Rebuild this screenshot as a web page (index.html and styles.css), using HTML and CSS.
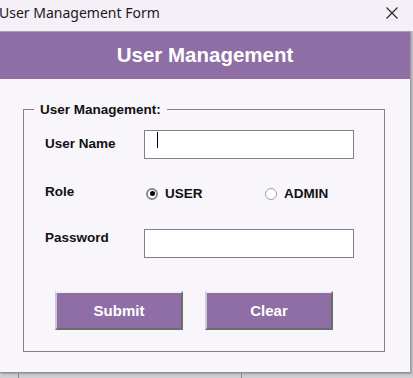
FILE: index.html
```html
<!DOCTYPE html>
<html lang="en">
<head>
<meta charset="UTF-8">
<meta name="viewport" content="width=device-width, initial-scale=1.0">
<title>User Management Form</title>
<link rel="stylesheet" href="styles.css">
</head>
<body>

<div class="titlebar">
  <span class="title">User Management Form</span>
  <svg class="close" width="12" height="12" viewBox="0 0 12 12">
    <path d="M0.5 0.5 L11.5 11.5 M11.5 0.5 L0.5 11.5" stroke="#222" stroke-width="1.1" fill="none"/>
  </svg>
</div>

<div class="window">
  <div class="banner">User Management</div>

  <fieldset class="group">
    <legend>User Management:</legend>
    <div class="group-body">
      <div class="row row-name">
        <div class="label label-name">User Name</div>
        <div class="textbox"><span class="caret"></span></div>
      </div>

      <div class="row row-role">
        <div class="label">Role</div>
        <div class="radios">
          <div class="option">
            <span class="radio checked"></span>
            <span>USER</span>
          </div>
          <div class="option">
            <span class="radio"></span>
            <span>ADMIN</span>
          </div>
        </div>
      </div>

      <div class="row row-pass">
        <div class="label label-pass">Password</div>
        <div class="textbox"></div>
      </div>

      <div class="buttons">
        <button class="btn">Submit</button>
        <button class="btn">Clear</button>
      </div>
    </div>
  </fieldset>
</div>

<div class="taskbar">
  <div class="tick tick-one"></div>
  <div class="tick tick-two"></div>
</div>

</body>
</html>
```

FILE: styles.css
```css
body {
  margin: 0;
  width: 413px;
  height: 378px;
  overflow: hidden;
  background: #cfcfd2;
  font-family: "Liberation Sans", Arial, sans-serif;
  color: #111;
}
.titlebar {
  height: 31px;
  background: #f5eff7;
  display: flex;
  align-items: center;
  justify-content: space-between;
  padding-right: 15px;
  box-sizing: border-box;
}
.title {
  font-family: "Noto Sans", "Open Sans", sans-serif;
  font-size: 14px;
  color: #1a1a1a;
  margin-top: -6px;
  margin-left: -1px;
}
.close {
  margin-top: -6px;
}
.window {
  height: 342px;
  margin-right: 2px;
  background: #f8f6fa;
  border-top: 1px solid #a9a4ab;
  border-right: 1px solid #a0a0a0;
  border-bottom: 1px solid #8e8e8e;
  box-shadow: 1px 1px 2px rgba(0, 0, 0, 0.25);
  box-sizing: border-box;
}
.banner {
  height: 47px;
  background: #8e6ea5;
  color: #fff;
  font-size: 20.5px;
  font-weight: bold;
  display: flex;
  align-items: center;
  justify-content: center;
  padding-bottom: 2px;
  box-sizing: border-box;
}
.group {
  margin: 23px 0 0 23px;
  width: 360px;
  padding: 0 0 21px 0;
  border: 1px solid #8a7a90;
  box-sizing: border-box;
}
.group legend {
  margin-left: 10px;
  padding: 0 6px;
  font-size: 13.5px;
  font-weight: bold;
}
.group-body {
  padding-left: 21px;
}
.row {
  display: flex;
  align-items: flex-start;
}
.label {
  width: 99px;
  font-size: 13.5px;
  font-weight: bold;
  line-height: 15px;
  padding-top: 1px;
}
.row-name {
  margin-top: 13px;
}
.label-name {
  padding-top: 6px;
}
.textbox {
  width: 210px;
  height: 29px;
  background: #fff;
  border: 1px solid #8a7a90;
  box-sizing: border-box;
}
.caret {
  display: block;
  width: 1px;
  height: 16px;
  background: #000;
  margin: 1px 0 0 12px;
}
.row-role {
  margin-top: 24px;
}
.radios {
  display: flex;
  padding-top: 3px;
  padding-left: 2px;
}
.option {
  width: 119px;
  display: flex;
  align-items: center;
  gap: 7px;
  font-size: 13.5px;
  font-weight: bold;
}
.radio {
  width: 12px;
  height: 12px;
  border-radius: 50%;
  border: 1px solid #a0a0a0;
  background: #fff;
  box-sizing: border-box;
  display: flex;
  align-items: center;
  justify-content: center;
}
.radio.checked {
  border: 2px solid #8a8a8a;
}
.radio.checked::after {
  content: "";
  width: 5px;
  height: 5px;
  border-radius: 50%;
  background: #000;
}
.row-pass {
  margin-top: 28px;
}
.label-pass {
  padding-top: 1px;
}
.buttons {
  display: flex;
  gap: 22px;
  margin: 33px 0 0 10px;
}
.btn {
  width: 128px;
  height: 39px;
  background: #8e6ea5;
  color: #fff;
  font-family: "Liberation Sans", Arial, sans-serif;
  font-size: 15px;
  font-weight: bold;
  border: 2px solid;
  border-color: #f2eef5 #6c6c6c #6c6c6c #cfc6d6;
  padding: 0;
}
.taskbar {
  display: flex;
  height: 6px;
}
.tick {
  border-left: 1px solid #8a8a8a;
}
.tick-one {
  margin-left: 18px;
}
.tick-two {
  margin-left: 222px;
}
```
